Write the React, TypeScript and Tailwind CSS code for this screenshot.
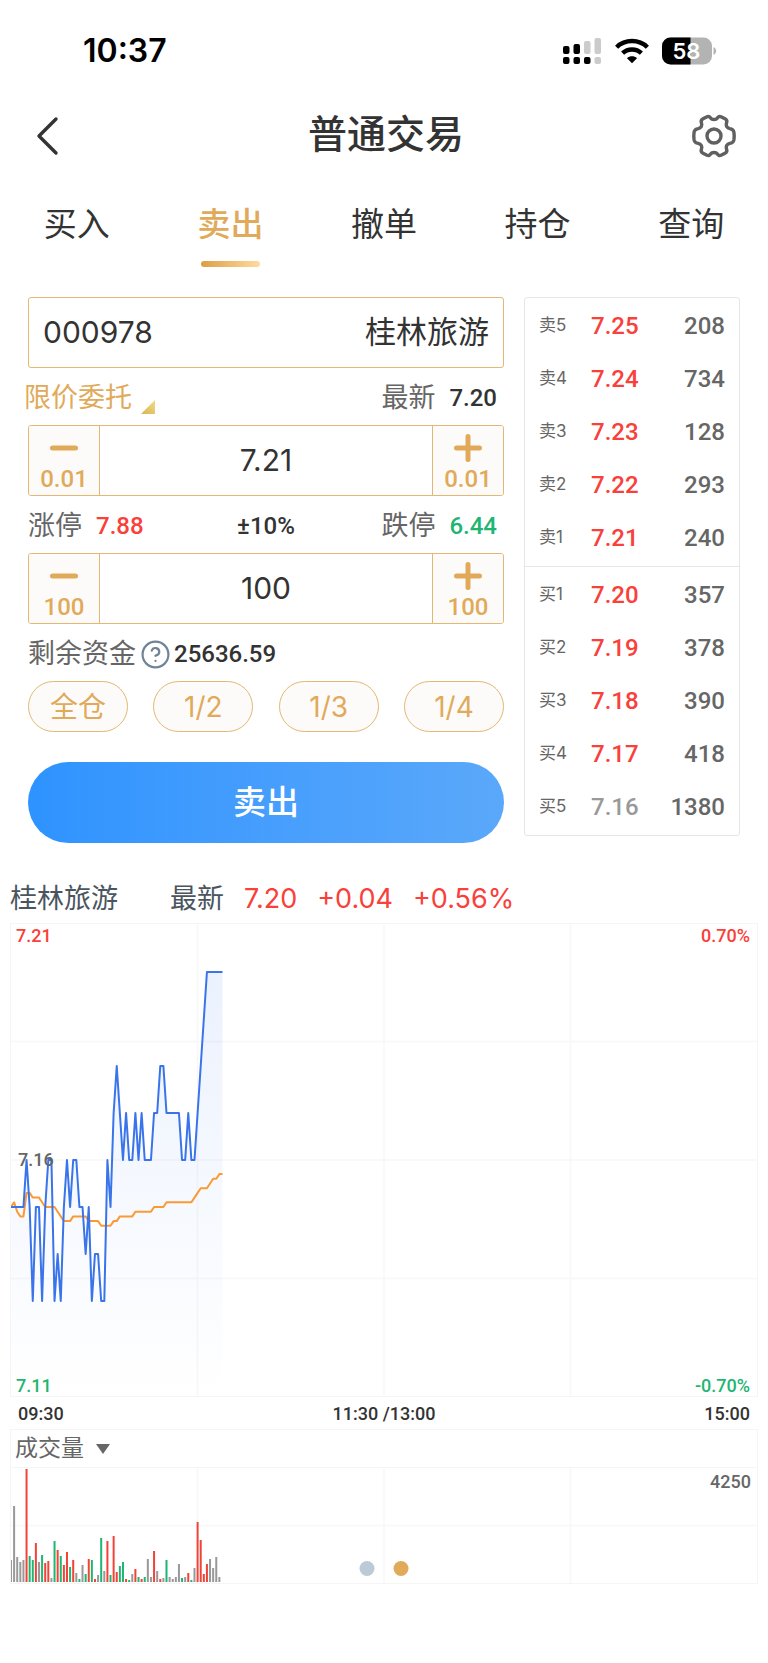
import React, { useState } from 'react';
import { CircleQuestionMark } from 'lucide-react';

interface Quote {
  label: string;
  price: string;
  volume: string;
  flat?: boolean;
}

const tabs = ['买入', '卖出', '撤单', '持仓', '查询'];

const asks: Quote[] = [
  { label: '卖5', price: '7.25', volume: '208' },
  { label: '卖4', price: '7.24', volume: '734' },
  { label: '卖3', price: '7.23', volume: '128' },
  { label: '卖2', price: '7.22', volume: '293' },
  { label: '卖1', price: '7.21', volume: '240' },
];

const bids: Quote[] = [
  { label: '买1', price: '7.20', volume: '357' },
  { label: '买2', price: '7.19', volume: '378' },
  { label: '买3', price: '7.18', volume: '390' },
  { label: '买4', price: '7.17', volume: '418' },
  { label: '买5', price: '7.16', volume: '1380', flat: true },
];

// Price per minute, in cents away from 7.16
const prices = [
  -1, -1, -1, -1, -1, 0, -1, -3, -1, -1, -3, -1, 0, 0, -3, -2, -3, -1, 0, -1, 0, 0, -1, -1,
  -2, -1, -3, -2, -2, -3, -3, 0, -1, 1, 2, 1, 0, 1, 0, 0, 1, 0, 1, 0, 0, 0, 1, 1, 2, 2, 1,
  1, 1, 1, 1, 0, 0, 1, 0, 0, 1, 2, 3, 4, 4, 4, 4, 4, 4,
];

// Average price, in tenths of a cent below 7.16
const averages = [
  10, 9, 11, 12, 12, 7, 7, 8, 8, 8, 9, 10, 10, 10, 10, 11, 12, 13, 13, 13, 12, 12, 12, 12,
  12, 13, 13, 13, 13, 14, 14, 14, 14, 13, 13, 12, 12, 12, 12, 12, 11, 11, 11, 11, 11, 11,
  10, 10, 10, 10, 9, 9, 9, 9, 9, 9, 9, 9, 9, 8, 7, 6, 6, 6, 5, 4, 4, 3, 3,
];

// Bar height and direction: u = up, d = down, f = flat
const volumes: [number, string][] = [
  [22, 'f'], [76, 'f'], [25, 'f'], [20, 'f'], [22, 'f'], [113, 'u'], [26, 'd'], [22, 'd'],
  [39, 'u'], [20, 'f'], [27, 'd'], [19, 'u'], [21, 'u'], [4, 'f'], [41, 'd'], [32, 'u'],
  [26, 'd'], [17, 'u'], [30, 'u'], [15, 'd'], [22, 'u'], [9, 'f'], [3, 'd'], [17, 'f'],
  [8, 'd'], [23, 'u'], [22, 'd'], [3, 'u'], [7, 'f'], [44, 'd'], [11, 'f'], [41, 'u'],
  [7, 'd'], [46, 'u'], [10, 'u'], [16, 'd'], [20, 'd'], [3, 'u'], [2, 'd'], [8, 'f'],
  [13, 'u'], [5, 'd'], [3, 'u'], [5, 'd'], [23, 'f'], [5, 'f'], [31, 'u'], [11, 'f'],
  [3, 'u'], [4, 'f'], [22, 'd'], [5, 'f'], [3, 'f'], [5, 'f'], [18, 'f'], [4, 'd'],
  [5, 'f'], [9, 'u'], [2, 'd'], [14, 'f'], [60, 'u'], [42, 'u'], [8, 'u'], [18, 'u'],
  [23, 'f'], [14, 'f'], [25, 'f'], [5, 'f'],
];

const barColors: Record<string, string> = { u: '#f04438', d: '#1fb573', f: '#999999' };

const STEP = 3.11;

const pricePoints = prices.map((p, i) => `${i * STEP},${236 - p * 47}`).join(' ');
const averagePoints = averages.map((p, i) => `${i * STEP},${236 + p * 4.7}`).join(' ');

function StatusBar() {
  return (
    <div className="flex h-[102px] items-center justify-between pr-[51px] pl-[83px]">
      <span className="font-['Inter',sans-serif] text-[32px] font-semibold text-black">10:37</span>
      <div className="flex items-center gap-[13px]">
        <svg width="39" height="28" viewBox="0 0 39 28">
          <g fill="#000">
            <rect x="0" y="9" width="6.5" height="8" rx="2" />
            <rect x="10.5" y="7" width="6.5" height="10" rx="2" />
            <rect x="0" y="20" width="6.5" height="7" rx="2" />
            <rect x="10.5" y="20" width="6.5" height="7" rx="2" />
            <rect x="21" y="20" width="6.5" height="7" rx="2" />
          </g>
          <g fill="#cbcbcb">
            <rect x="21" y="4" width="6.5" height="13" rx="2" />
            <rect x="31.5" y="1" width="6.5" height="16" rx="2" />
            <rect x="31.5" y="20" width="6.5" height="7" rx="2" />
          </g>
        </svg>
        <svg width="34" height="26" viewBox="0 0 34 26" fill="none" stroke="#000" strokeWidth="4.4">
          <path d="M1.6 9.2C10 1 24 1 32.4 9.2" />
          <path d="M7.6 15.2C12.8 10.2 21.2 10.2 26.4 15.2" />
          <path d="M17 25.2L12 20.2C14.6 17.6 19.4 17.6 22 20.2Z" fill="#000" stroke="none" />
        </svg>
        <svg width="55" height="28" viewBox="0 0 55 28">
          <defs>
            <clipPath id="battery">
              <rect x="0" y="0.5" width="50" height="27" rx="8.5" />
            </clipPath>
          </defs>
          <g clipPath="url(#battery)">
            <rect width="50" height="28" fill="#b3b3b3" />
            <rect width="28.5" height="28" fill="#000" />
          </g>
          <path d="M51.5 10C55 11.5 55 16.5 51.5 18Z" fill="#b3b3b3" />
          <text
            x="24.5"
            y="22"
            textAnchor="middle"
            fill="#fff"
            className="font-['Inter',sans-serif] text-[22px] font-semibold"
          >
            58
          </text>
        </svg>
      </div>
    </div>
  );
}

function Header() {
  return (
    <header className="flex h-[68px] items-center justify-between pr-[31px] pl-[35px]">
      <button aria-label="返回" className="w-[46px]">
        <svg width="24" height="40" viewBox="0 0 24 40" fill="none" stroke="#333" strokeWidth="3.4">
          <path d="M21 3L4 20L21 37" strokeLinecap="round" strokeLinejoin="round" />
        </svg>
      </button>
      <h1 className="pb-[4px] text-[39px] font-medium text-[#333]">普通交易</h1>
      <button aria-label="设置" className="flex w-[46px] justify-end">
        <svg width="46" height="44" viewBox="0 0 46 44" fill="none" stroke="#606060" strokeWidth="3.4" strokeLinejoin="round">
          <path d="M15.5 2.9C17.5 1.9 19 2.6 19.8 4.2C21 6 25 6 26.2 4.2C27 2.6 28.5 1.9 30.5 2.9L34 4.8C35.8 5.8 36.2 7.4 35.5 9C34.6 11.6 36 14 38.8 14.6C41 14.9 42.4 15.6 42.9 18C43.3 20.5 43.3 23.5 42.9 26C42.4 28.4 41 29.1 38.8 29.4C36 30 34.6 32.4 35.5 35C36.2 36.6 35.8 38.2 34 39.2L30.5 41.1C28.5 42.1 27 41.4 26.2 39.8C25 38 21 38 19.8 39.8C19 41.4 17.5 42.1 15.5 41.1L12 39.2C10.2 38.2 9.8 36.6 10.5 35C11.4 32.4 10 30 7.2 29.4C5 29.1 3.6 28.4 3.1 26C2.7 23.5 2.7 20.5 3.1 18C3.6 15.6 5 14.9 7.2 14.6C10 14 11.4 11.6 10.5 9C9.8 7.4 10.2 5.8 12 4.8Z" />
          <circle cx="23" cy="22" r="7" />
        </svg>
      </button>
    </header>
  );
}

interface StepperProps {
  label: string;
  step: string;
  value: string;
  onChange: (value: string) => void;
}

function Stepper({ label, step, value, onChange }: StepperProps) {
  const digits = step.includes('.') ? 2 : 0;
  const move = (sign: number) => onChange((Number(value) + sign * Number(step)).toFixed(digits));

  return (
    <div className="flex h-[71px] overflow-hidden rounded-[3px] border border-[#e3b873]">
      <button
        aria-label={`${label}减少`}
        onClick={() => move(-1)}
        className="flex w-[71px] flex-col items-center gap-[3px] border-r border-[#e3b873] bg-[#fdfbf9] pt-[8px] text-[#e0aa5a]"
      >
        <svg width="28" height="28" viewBox="0 0 28 28" stroke="currentColor" strokeWidth="5" strokeLinecap="round">
          <path d="M2.5 14H25.5" />
        </svg>
        <span className="font-['Roboto',sans-serif] text-[24px] leading-[28px] font-medium">{step}</span>
      </button>
      <input
        aria-label={label}
        value={value}
        onChange={(e) => onChange(e.target.value)}
        className="min-w-0 flex-1 text-center text-[30px] text-[#333] outline-none"
      />
      <button
        aria-label={`${label}增加`}
        onClick={() => move(1)}
        className="flex w-[71px] flex-col items-center gap-[3px] border-l border-[#e3b873] bg-[#fdfbf9] pt-[8px] text-[#e0aa5a]"
      >
        <svg width="28" height="28" viewBox="0 0 28 28" stroke="currentColor" strokeWidth="5" strokeLinecap="round">
          <path d="M2.5 14H25.5M14 2.5V25.5" />
        </svg>
        <span className="font-['Roboto',sans-serif] text-[24px] leading-[28px] font-medium">{step}</span>
      </button>
    </div>
  );
}

function QuoteTable({ rows }: { rows: Quote[] }) {
  return (
    <table className="w-full">
      <tbody>
        {rows.map((row) => (
          <tr key={row.label} className="h-[53px]">
            <th scope="row" className="w-[66px] pl-[14px] text-left text-[17px] font-normal text-[#666]">
              {row.label}
            </th>
            <td
              className={`font-['Roboto',sans-serif] text-[24px] leading-8 font-medium ${
                row.flat ? 'text-[#999]' : 'text-[#f9403a]'
              }`}
            >
              {row.price}
            </td>
            <td className="pr-[14px] text-right font-['Roboto',sans-serif] text-[24px] leading-8 font-medium text-[#666]">
              {row.volume}
            </td>
          </tr>
        ))}
      </tbody>
    </table>
  );
}

function PriceChart() {
  return (
    <div className="relative border border-[#f5f5f5] font-['Roboto',sans-serif] text-[18px] leading-5 font-medium">
      <svg className="block h-[472px] w-full" viewBox="0 0 746 472" preserveAspectRatio="none">
        <defs>
          <linearGradient id="area" x1="0" y1="0" x2="0" y2="1">
            <stop offset="0" stopColor="#3a78ee" stopOpacity="0.1" />
            <stop offset="1" stopColor="#3a78ee" stopOpacity="0" />
          </linearGradient>
        </defs>
        <path d="M0 117.5H746M0 236H746M0 354.5H746M186.5 0V472M373 0V472M559.5 0V472" stroke="#f7f7f7" strokeWidth="1.5" />
        <polygon points={`0,472 ${pricePoints} 211.5,472`} fill="url(#area)" />
        <polyline points={averagePoints} fill="none" stroke="#fb9a35" strokeWidth="2" strokeLinejoin="round" />
        <polyline points={pricePoints} fill="none" stroke="#3a74ea" strokeWidth="2" strokeLinejoin="round" />
      </svg>
      <span className="absolute top-[2px] left-[5px] text-[#f9403a]">7.21</span>
      <span className="absolute top-[2px] right-[7px] text-[#f9403a]">0.70%</span>
      <span className="absolute top-[226px] left-[7px] text-[#666]">7.16</span>
      <span className="absolute bottom-0 left-[5px] text-[#1fb573]">7.11</span>
      <span className="absolute right-[7px] bottom-0 text-[#1fb573]">-0.70%</span>
    </div>
  );
}

function VolumeChart() {
  return (
    <div className="relative border border-t-0 border-[#f5f5f5]">
      <svg className="block h-[115px] w-full" viewBox="0 0 746 115" preserveAspectRatio="none">
        <path d="M0 57.5H746M186.5 0V115M373 0V115M559.5 0V115" stroke="#f7f7f7" strokeWidth="1.5" />
        {volumes.map(([height, dir], i) => (
          <rect key={i} x={i * STEP - 1} y={114 - height} width="2" height={height} fill={barColors[dir]} />
        ))}
      </svg>
      <span className="absolute top-[4px] right-[6px] font-['Roboto',sans-serif] text-[18px] leading-5 font-medium text-[#666]">
        4250
      </span>
      <div className="absolute bottom-[7px] left-1/2 flex -translate-x-1/2 gap-[19px]">
        <button aria-label="第1页" className="size-[15px] rounded-full bg-[#bccad8]" />
        <button aria-label="第2页" className="size-[15px] rounded-full bg-[#e0aa5a]" />
      </div>
    </div>
  );
}

export default function App() {
  const [tab, setTab] = useState('卖出');
  const [code, setCode] = useState('000978');
  const [price, setPrice] = useState('7.21');
  const [amount, setAmount] = useState('100');

  return (
    <div className="min-h-screen bg-white pb-[78px] font-['Inter','Noto_Sans_CJK_SC',sans-serif] text-[#333]">
      <StatusBar />
      <Header />

      <nav className="grid grid-cols-5 pt-[30px]">
        {tabs.map((name) => (
          <button
            key={name}
            onClick={() => setTab(name)}
            className={`flex flex-col items-center gap-[13px] text-[33px] leading-[48px] ${
              name === tab ? 'font-medium text-[#e0aa5a]' : ''
            }`}
          >
            {name}
            {name === tab && (
              <span className="h-[6px] w-[59px] rounded-[3px] bg-linear-to-r from-[#dc9e44] to-[#ffdb9f]" />
            )}
          </button>
        ))}
      </nav>

      <main>
        <div className="flex items-start gap-[20px] px-[28px] pt-[30px]">
          {/* 委托表单 */}
          <section className="min-w-0 flex-1">
            <div className="flex h-[71px] items-center rounded-[3px] border border-[#e3b873] px-[14px]">
              <input
                aria-label="证券代码"
                value={code}
                onChange={(e) => setCode(e.target.value)}
                className="min-w-0 flex-1 text-[30px] outline-none"
              />
              <span className="text-[31px]">桂林旅游</span>
            </div>

            <div className="flex h-[57px] items-center justify-between pt-[3px] text-[27px] text-[#666]">
              <button className="-ml-[4px] flex items-center gap-[9px] text-[#e0aa5a]">
                限价委托
                <svg width="14" height="14" viewBox="0 0 14 14" className="mt-[17px]">
                  <defs>
                    <linearGradient id="corner" x1="0" y1="1" x2="1" y2="0">
                      <stop offset="0" stopColor="#d9b44a" />
                      <stop offset="1" stopColor="#f0dc8c" />
                    </linearGradient>
                  </defs>
                  <path d="M14 0V14H0Z" fill="url(#corner)" />
                </svg>
              </button>
              <div className="flex items-center gap-[14px] pr-[7px]">
                最新
                <span className="font-['Roboto',sans-serif] text-[24px] font-medium text-[#333]">7.20</span>
              </div>
            </div>

            <Stepper label="委托价格" step="0.01" value={price} onChange={setPrice} />

            <div className="grid h-[57px] grid-cols-3 items-center pt-[3px] text-[27px] text-[#666]">
              <div className="flex items-center gap-[14px]">
                涨停
                <span className="font-['Roboto',sans-serif] text-[24px] font-medium text-[#f9403a]">7.88</span>
              </div>
              <span className="text-center font-['Roboto',sans-serif] text-[24px] font-medium text-[#333]">±10%</span>
              <div className="flex items-center justify-end gap-[14px] pr-[7px]">
                跌停
                <span className="font-['Roboto',sans-serif] text-[24px] font-medium text-[#1fb573]">6.44</span>
              </div>
            </div>

            <Stepper label="委托数量" step="100" value={amount} onChange={setAmount} />

            <div className="flex h-[57px] items-center pt-[3px] text-[27px] text-[#666]">
              剩余资金
              <button aria-label="说明" className="mr-[3px] ml-[4px]">
                <CircleQuestionMark size={31} strokeWidth={1.7} color="#708496" />
              </button>
              <span className="font-['Roboto',sans-serif] text-[24px] font-medium text-[#333]">25636.59</span>
            </div>

            <div className="flex justify-between">
              {['全仓', '1/2', '1/3', '1/4'].map((part) => (
                <button
                  key={part}
                  className="h-[51px] w-[100px] rounded-full border border-[#e3b873] bg-[#fdfbf9] text-[28px] text-[#e0aa5a]"
                >
                  {part}
                </button>
              ))}
            </div>

            <button className="mt-[30px] h-[81px] w-full rounded-full bg-linear-to-r from-[#2e93ff] to-[#5aa8fa] text-[33px] font-medium text-white">
              卖出
            </button>
          </section>

          {/* 五档盘口 */}
          <section className="w-[216px] rounded-[3px] border border-[#e6e6e6]">
            <div className="border-b border-[#e6e6e6] pt-[1px] pb-[2px]">
              <QuoteTable rows={asks} />
            </div>
            <div className="pt-[1px] pb-[2px]">
              <QuoteTable rows={bids} />
            </div>
          </section>
        </div>

        {/* 分时图 */}
        <section className="mt-[33px] px-[10px]">
          <div className="flex h-[47px] items-center text-[27px] text-[#4a5560]">
            <span className="mr-[52px]">桂林旅游</span>
            <span className="mr-[20px]">最新</span>
            <span className="flex gap-[20px] text-[#f9403a]">
              <span>7.20</span>
              <span>+0.04</span>
              <span>+0.56%</span>
            </span>
          </div>
          <PriceChart />
          <div className="grid h-[32px] grid-cols-3 items-center px-[8px] font-['Roboto',sans-serif] text-[18px] font-medium">
            <span>09:30</span>
            <span className="text-center">11:30 /13:00</span>
            <span className="text-right">15:00</span>
          </div>
          <div className="flex h-[39px] items-center border border-[#f5f5f5] px-[4px]">
            <button className="flex items-center gap-[12px] text-[23px] text-[#666]">
              成交量
              <svg width="14" height="10" viewBox="0 0 14 10" fill="#666">
                <path d="M0 0H14L7 10Z" />
              </svg>
            </button>
          </div>
          <VolumeChart />
        </section>
      </main>
    </div>
  );
}
